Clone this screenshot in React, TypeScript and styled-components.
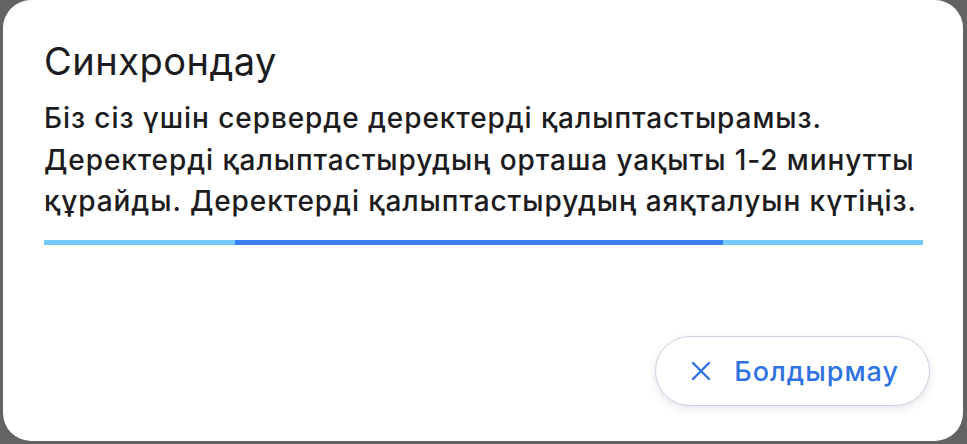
import React from 'react';
import styled, { createGlobalStyle } from 'styled-components';

const Global = createGlobalStyle`
  html, body { margin:0; padding:0; background:#636366; }
  body { font-family: Inter, "Noto Sans", sans-serif; -webkit-font-smoothing: antialiased; }
`;

const Screen = styled.div`
  width:967px; height:444px; box-sizing:border-box;
  padding:0 4px 3px 3px; display:flex;
`;
const Dialog = styled.div`
  flex:1; background:#fff; border-radius:28px;
  padding:38px 33px 35px 41px;
  display:flex; flex-direction:column;
`;
const Title = styled.h2`
  margin:0; font-size:38px; font-weight:400; color:#1b1b20; line-height:46px;
  letter-spacing:0.5px;
`;
const Body = styled.p`
  margin:14px 0 0; font-size:28px; font-weight:500; color:#1b1b20;
  line-height:41.5px; letter-spacing:0.92px; white-space:nowrap;
`;
const Track = styled.div`
  margin-top:17px; height:5px; background:#74c8f5; position:relative;
  overflow:hidden; margin-right:7px;
`;
const Fill = styled.div`
  position:absolute; top:0; bottom:0; background:#3a7ff5;
`;
const Footer = styled.div`
  margin-top:auto; display:flex; justify-content:flex-end;
`;
const CancelButton = styled.button`
  appearance:none; display:flex; align-items:center; gap:23px;
  height:70px; padding:0 30px 0 35px; border-radius:35px;
  border:1px solid #cdd0e2; background:#fff;
  box-shadow:0 3px 8px rgba(40,40,80,0.12);
  font-family:Inter, "Noto Sans", sans-serif; font-size:27px; font-weight:500;
  color:#2f72e3; letter-spacing:1px; cursor:pointer;
  svg { flex:none; }
`;

export default function App() {
  const start = 191 / 879;
  const width = 488 / 879;
  return (
    <>
      <Global />
      <Screen>
        <Dialog>
          <Title>Синхрондау</Title>
          <Body>
            Біз сіз үшін серверде деректерді қалыптастырамыз.<br />
            Деректерді қалыптастырудың орташа уақыты 1-2 минутты<br />
            құрайды. Деректерді қалыптастырудың аяқталуын күтіңіз.
          </Body>
          <Track>
            <Fill style={{ left: `${start * 100}%`, width: `${width * 100}%` }} />
          </Track>
          <Footer>
            <CancelButton>
              <svg width="20" height="20" viewBox="0 0 20 20" fill="none" stroke="#2f72e3" strokeWidth="2.4" strokeLinecap="round">
                <path d="M2 2 L18 18 M18 2 L2 18" />
              </svg>
              Болдырмау
            </CancelButton>
          </Footer>
        </Dialog>
      </Screen>
    </>
  );
}
